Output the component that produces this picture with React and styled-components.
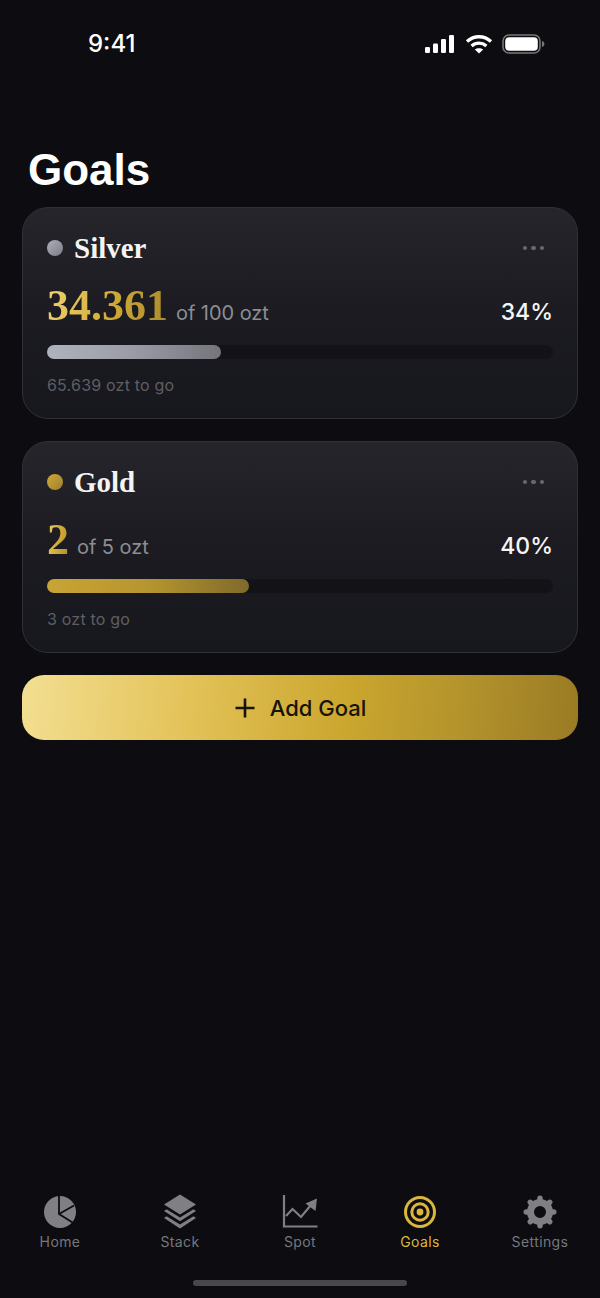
import React from 'react'
import styled, { createGlobalStyle } from 'styled-components'

const GlobalStyle = createGlobalStyle`
  html, body, #root {
    margin: 0;
    height: 100%;
    background: #0c0c11;
  }
  * { box-sizing: border-box; }
`;

const Screen = styled.div`
  width: 600px;
  height: 1298px;
  display: flex;
  flex-direction: column;
  background: #0c0c11;
  font-family: Inter, "Liberation Sans", sans-serif;
  overflow: hidden;
`;

const StatusBar = styled.div`
  height: 87px;
  padding: 0 55px 0 88px;
  display: flex;
  align-items: center;
  justify-content: space-between;
`;

const Time = styled.span`
  font-size: 24px;
  font-weight: 500;
  color: #fff;
  line-height: 1;
`;

const StatusIcons = styled.div`
  display: flex;
  align-items: center;
  gap: 9px;
`;

const Title = styled.h1`
  margin: 58px 0 12px 28px;
  font-family: "Liberation Sans", Arial, sans-serif;
  font-size: 44px;
  line-height: 50px;
  font-weight: 700;
  color: #fff;
`;

const Content = styled.div`
  padding: 0 22px;
  display: flex;
  flex-direction: column;
  gap: 22px;
`;

const Card = styled.div`
  height: 212px;
  padding: 0 24px;
  border-radius: 26px;
  border: 1px solid #303036;
  background: linear-gradient(180deg, #25252b 0%, #1b1b21 50%, #17171e 100%);
  display: flex;
  flex-direction: column;
`;

const CardHead = styled.div`
  height: 80px;
  display: flex;
  align-items: center;
  gap: 11px;
`;

const MetalDot = styled.span`
  width: 16px;
  height: 16px;
  border-radius: 50%;
  background: ${(p) =>
    p.$metal === 'gold'
      ? 'linear-gradient(135deg, #cfaa3a, #9c7f2a)'
      : 'linear-gradient(135deg, #aeb0ba, #7b7c86)'};
`;

const MetalName = styled.span`
  flex: 1;
  font-family: "Liberation Serif", serif;
  font-size: 29px;
  font-weight: 700;
  color: #f4f4f2;
`;

const More = styled.div`
  display: flex;
  gap: 4px;
  margin-right: 9px;
`;

const MoreDot = styled.span`
  width: 4.5px;
  height: 4.5px;
  border-radius: 50%;
  background: #68686e;
`;

const AmountRow = styled.div`
  height: 48px;
  margin-top: -6px;
  display: flex;
  align-items: baseline;
  gap: 8px;
`;

const Amount = styled.span`
  font-family: "Liberation Serif", serif;
  font-size: 44px;
  line-height: 48px;
  font-weight: 700;
  background: linear-gradient(100deg, #efd271 0%, #cfa935 55%, #a98a2c 100%);
  -webkit-background-clip: text;
  background-clip: text;
  color: transparent;
`;

const Target = styled.span`
  flex: 1;
  font-size: 20px;
  letter-spacing: -0.05px;
  color: #8d8d92;
`;

const Percent = styled.span`
  font-size: 23px;
  font-weight: 500;
  color: #f5f5f5;
`;

const Track = styled.div`
  margin-top: 15px;
  height: 14px;
  border-radius: 7px;
  background: #131317;
`;

const Fill = styled.div`
  height: 100%;
  border-radius: 7px;
  background: ${(p) =>
    p.$metal === 'gold'
      ? 'linear-gradient(90deg, #c9a435, #b7952f 50%, #806a2b 100%)'
      : 'linear-gradient(90deg, #b1b3bc, #9a9ba4 50%, #73747c 100%)'};
`;

const Remaining = styled.div`
  margin-top: 16px;
  font-size: 16px;
  line-height: 20px;
  letter-spacing: 0.2px;
  color: #5f5f64;
`;

const AddButton = styled.button`
  height: 65px;
  border: none;
  border-radius: 22px;
  background: linear-gradient(95deg, #f3df92 0%, #e3c258 30%, #cba72f 58%, #b2922b 80%, #9a7b24 100%);
  display: flex;
  align-items: center;
  justify-content: center;
  gap: 14px;
  font-family: Inter, sans-serif;
  font-size: 22px;
  font-weight: 500;
  color: #17130a;
`;

const TabBar = styled.nav`
  margin-top: auto;
  height: 118px;
  padding-top: 14px;
  display: grid;
  grid-template-columns: repeat(5, 120px);
  position: relative;
`;

const Tab = styled.div`
  display: flex;
  flex-direction: column;
  align-items: center;
  gap: 3px;
  font-size: 14px;
  line-height: 18px;
  font-weight: 400;
  letter-spacing: 0.4px;
  color: ${(p) => (p.$active ? '#dcb63c' : '#77777c')};
`;

const HomeBar = styled.div`
  position: absolute;
  left: 193px;
  bottom: 12px;
  width: 214px;
  height: 6px;
  border-radius: 3px;
  background: #48484c;
`;

const SignalIcon = () => (
  <svg width="32" height="20" viewBox="0 0 32 20" fill="#fff">
    <rect x="1" y="13" width="5" height="6" rx="1.2" />
    <rect x="9" y="9.5" width="5" height="9.5" rx="1.2" />
    <rect x="17" y="5" width="5" height="14" rx="1.2" />
    <rect x="25" y="1" width="5" height="18" rx="1.2" />
  </svg>
);

const WifiIcon = () => (
  <svg width="28" height="20" viewBox="0 0 28 20" fill="none" stroke="#fff" strokeWidth="3.4">
    <path d="M2 7.5C9 1.2 19 1.2 26 7.5" />
    <path d="M6.6 12C11 8.2 17 8.2 21.4 12" />
    <path d="M14 19.5L9.8 15.6C12.3 13.7 15.7 13.7 18.2 15.6Z" fill="#fff" stroke="none" />
  </svg>
);

const BatteryIcon = () => (
  <svg width="43" height="20" viewBox="0 0 43 20">
    <rect x="1" y="1" width="37" height="18" rx="6" fill="none" stroke="#77777a" strokeWidth="1.6" />
    <rect x="3.2" y="3.2" width="32.6" height="13.6" rx="4" fill="#fff" />
    <path d="M40 7C41.6 7.4 42.4 8.6 42.4 10S41.6 12.6 40 13Z" fill="#77777a" />
  </svg>
);

const PieIcon = ({ color }) => (
  <svg width="36" height="36" viewBox="0 0 36 36">
    <circle cx="18" cy="18" r="16" fill={color} />
    <path d="M17 1.5V20L30.5 28.5M17 20L32 11.5" fill="none" stroke="#0c0c11" strokeWidth="1.8" />
  </svg>
);

const StackIcon = ({ color }) => (
  <svg width="36" height="36" viewBox="0 0 36 36" fill={color}>
    <path d="M18 0.5L34 10.5L18 20.5L2 10.5Z" />
    <path d="M2 17L4.5 15.2L18 23.4L31.5 15.2L34 17L18 27.2Z" />
    <path d="M2 24L4.5 22.2L18 30.4L31.5 22.2L34 24L18 34.5Z" />
  </svg>
);

const SpotIcon = ({ color }) => (
  <svg width="36" height="36" viewBox="0 0 36 36" fill="none" stroke={color} strokeWidth="2.2">
    <path d="M2 1V32.5H35.5" />
    <path d="M4 22L10.5 15L19 23L29 11" />
    <path d="M35 4.5L33.5 17L23.5 9.5Z" fill={color} stroke="none" />
  </svg>
);

const TargetIcon = ({ color }) => (
  <svg width="36" height="36" viewBox="0 0 36 36" fill="none" stroke={color} strokeWidth="3">
    <circle cx="18" cy="18" r="14.5" />
    <circle cx="18" cy="18" r="8.2" />
    <circle cx="18" cy="18" r="3.4" fill={color} stroke="none" />
  </svg>
);

const GearIcon = ({ color }) => (
  <svg width="36" height="36" viewBox="0 0 36 36" fill="none" stroke={color}>
    <circle cx="18" cy="18" r="9.5" strokeWidth="7" />
    {[0, 45, 90, 135, 180, 225, 270, 315].map((deg) => (
      <line key={deg} x1="18" y1="6.5" x2="18" y2="4.2" strokeWidth="5.4" strokeLinecap="round" transform={`rotate(${deg} 18 18)`} />
    ))}
  </svg>
);

const goals = [
  { metal: 'silver', name: 'Silver', amount: '34.361', target: 'of 100 ozt', pct: 34, fill: 34.4, left: '65.639 ozt to go' },
  { metal: 'gold', name: 'Gold', amount: '2', target: 'of 5 ozt', pct: 40, fill: 40, left: '3 ozt to go' },
];

const tabs = [
  { label: 'Home', Icon: PieIcon },
  { label: 'Stack', Icon: StackIcon },
  { label: 'Spot', Icon: SpotIcon },
  { label: 'Goals', Icon: TargetIcon, active: true },
  { label: 'Settings', Icon: GearIcon },
];

const App = () => {
  return (
    <Screen>
      <GlobalStyle />
      <StatusBar>
        <Time>9:41</Time>
        <StatusIcons>
          <SignalIcon />
          <WifiIcon />
          <BatteryIcon />
        </StatusIcons>
      </StatusBar>
      <Title>Goals</Title>
      <Content>
        {goals.map((g) => (
          <Card key={g.name}>
            <CardHead>
              <MetalDot $metal={g.metal} />
              <MetalName>{g.name}</MetalName>
              <More>
                <MoreDot />
                <MoreDot />
                <MoreDot />
              </More>
            </CardHead>
            <AmountRow>
              <Amount>{g.amount}</Amount>
              <Target>{g.target}</Target>
              <Percent>{g.pct}%</Percent>
            </AmountRow>
            <Track>
              <Fill $metal={g.metal} style={{ width: `${g.fill}%` }} />
            </Track>
            <Remaining>{g.left}</Remaining>
          </Card>
        ))}
        <AddButton>
          <svg width="22" height="22" viewBox="0 0 22 22" stroke="#17130a" strokeWidth="2.6">
            <path d="M11 1.5V20.5M1.5 11H20.5" />
          </svg>
          Add Goal
        </AddButton>
      </Content>
      <TabBar>
        {tabs.map(({ label, Icon, active }) => (
          <Tab key={label} $active={active}>
            <Icon color={active ? '#dcb63c' : '#7f7f84'} />
            {label}
          </Tab>
        ))}
        <HomeBar />
      </TabBar>
    </Screen>
  );
};

export default App;
